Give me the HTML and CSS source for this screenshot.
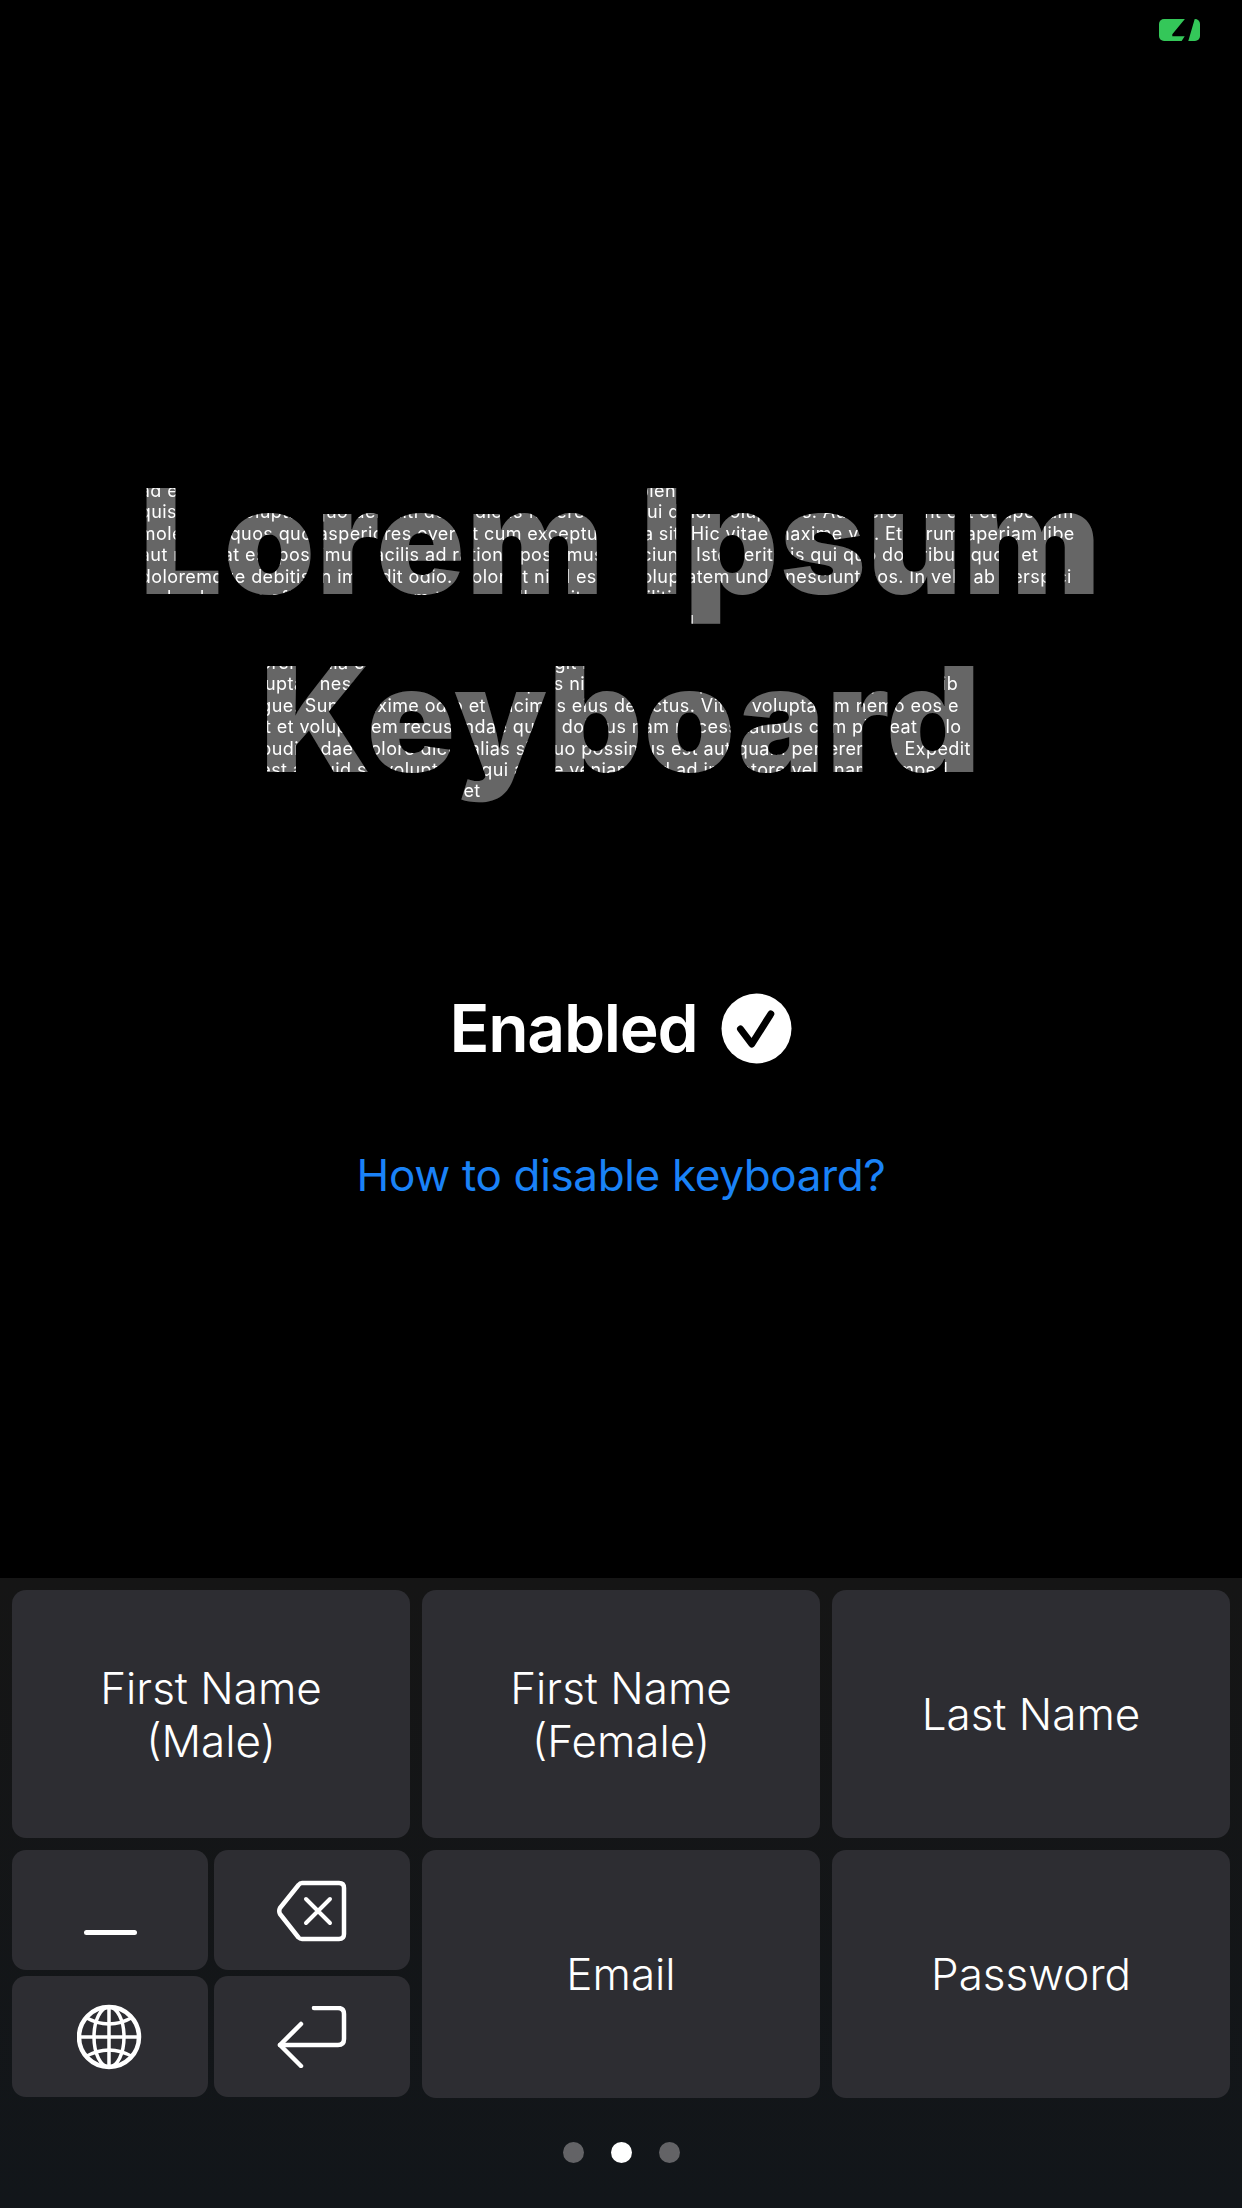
FILE: index.html
```html
<!DOCTYPE html>
<html lang="en">
<head>
  <meta charset="UTF-8">
  <title>Lorem Ipsum Keyboard</title>
  <link rel="stylesheet" href="styles.css">
</head>
<body>
  <div class="status-bar">
    <svg class="battery" width="41" height="22" viewBox="0 0 41 22">
      <rect width="41" height="22" rx="5" fill="#34c759"/>
      <path d="M26.700 -1 L13.300 15.300 V17.300 H25.700 L22 23 H29 L36 -1 Z" fill="#000"/>
    </svg>
  </div>

  <main class="hero">
    <h1 class="title">
      <span class="title-line">
        <span class="lorem">ad et voluptas nobis quaerat sint dolorem fuga ipsum sapiente<br>quis dolor voluptas quo deleniti dolor dictis facere. Sint qui dolor voluptates. Aut vero sunt est et aperiam<br>molestias quos quo asperiores ever et cum excepturi quia sit. Hic vitae maxime vel. Et rerum aperiam libe<br>aut repellat est possimus facilis ad ratione possimus nesciunt. Iste veritatis qui quo doloribus quod et<br>doloremque debitis in impedit odio. Dolor ut nihil est ut voluptatem unde nesciunt eos. In velit ab perspici<br>ea laudantium officiis non harum tempora illum sit nam militia<br>aliquam quia rerum dolores saepe et ratione nemo odit ad volu</span>
        <span class="title-mask">Lorem Ipsum</span>
      </span>
      <span class="title-line">
        <span class="lorem lorem-low">orem quia et tempora sint nam fugit rerum<br>luptas nesciunt dolorem sit capitis nihil magnam quod ut et sint nec quantitatib<br>gue. Sunt maxime odio et ducimus eius delectus. Vitae voluptatem nemo eos e<br>it et voluptatem recusandae quos dolibus nam necessitatibus cum placeat dolo<br>pudiandae dolore dicta alias sit quo possimus est aut quam perferendis. Expedit<br>est aliquid sit voluptates qui atque veniam sed ad inventore velit nam e imped<br>quia sit nobis ut mollis et</span>
        <span class="title-mask">Keyboard</span>
      </span>
    </h1>

    <div class="enabled">
      <span>Enabled</span>
      <svg class="check" width="71" height="71" viewBox="0 0 71 71">
        <circle cx="35.500" cy="35.500" r="35" fill="#fff"/>
        <path d="M19.500 36 L30.800 51 L49.800 21" fill="none" stroke="#000" stroke-width="7" stroke-linecap="round" stroke-linejoin="round"/>
      </svg>
    </div>

    <a class="help-link" href="#">How to disable keyboard?</a>
  </main>

  <section class="keyboard">
    <div class="keys">
      <button class="key">First Name<br>(Male)</button>
      <button class="key">First Name<br>(Female)</button>
      <button class="key">Last Name</button>

      <div class="mini-keys">
        <button class="key"><span class="space-bar"></span></button>
        <button class="key">
          <svg width="72" height="62" viewBox="0 0 72 62" fill="none" stroke="#fff" stroke-width="4.500" stroke-linejoin="round" stroke-linecap="round">
            <path d="M26 3 H63 Q68 3 68 8 V54 Q68 59 63 59 H26 Q24 59 22.500 57.500 L4 34 Q2.500 31 4 28 L22.500 5 Q24 3 26 3 Z"/>
            <path d="M30 19 L54 43 M54 19 L30 43" stroke-width="4"/>
          </svg>
        </button>
        <button class="key">
          <svg width="66" height="66" viewBox="1 0 66 66" fill="none" stroke="#fff" stroke-width="3.500">
            <circle cx="33" cy="33" r="30" stroke-width="4.500"/>
            <ellipse cx="33" cy="33" rx="15" ry="30"/>
            <path d="M33 3 V63 M3 33 H63"/>
            <path d="M9 13 Q33 27 57 13 M9 53 Q33 39 57 53"/>
          </svg>
        </button>
        <button class="key">
          <svg width="72" height="62" viewBox="0 0 72 62" fill="none" stroke="#fff" stroke-width="4.500" stroke-linejoin="round" stroke-linecap="round">
            <path d="M38 2 H62 Q68 2 68 8 V33 Q68 39 62 39 H4"/>
            <path d="M25 18 L4 39 L25 60"/>
          </svg>
        </button>
      </div>

      <button class="key">Email</button>
      <button class="key">Password</button>
    </div>

    <div class="page-dots">
      <span class="dot"></span>
      <span class="dot active"></span>
      <span class="dot"></span>
    </div>
  </section>
</body>
</html>
```
FILE: styles.css
```css
* {
  box-sizing: border-box;
}

body {
  margin: 0;
  height: 2208px;
  display: flex;
  flex-direction: column;
  background: #000;
  color: #fff;
  font-family: Inter, "Noto Sans", sans-serif;
  overflow: hidden;
}

.status-bar {
  height: 60px;
  padding: 19px 42px 0 0;
  display: flex;
  justify-content: flex-end;
  align-items: flex-start;
}

.hero {
  flex: 1;
  display: flex;
  flex-direction: column;
  align-items: center;
  padding-top: 392px;
}

.title {
  margin: 0;
  display: flex;
  flex-direction: column;
  align-items: center;
  font-size: 146px;
  font-weight: 900;
  letter-spacing: 1.300px;
}

/* gray block with small text, the mask lets it through only inside the letters */
.title-line {
  display: grid;
  isolation: isolate;
  overflow: hidden;
  height: 178px;
  line-height: 178px;
  background: #666;
}

.lorem,
.title-mask {
  grid-area: 1 / 1;
}

.lorem {
  width: 0;
  min-width: 100%;
  padding-top: 28px;
  font-size: 18px;
  font-weight: 400;
  line-height: 21.400px;
  letter-spacing: 0.4px;
  white-space: nowrap;
  overflow: hidden;
}

.lorem-low {
  padding-top: 22px;
}

.title-mask {
  background: #000;
  color: #fff;
  mix-blend-mode: multiply;
  white-space: nowrap;
  word-spacing: 5px;
}

.enabled {
  margin-top: 180px;
  display: flex;
  align-items: center;
  gap: 24px;
  font-size: 66px;
  font-weight: 600;
  letter-spacing: -1.300px;
}

.help-link {
  margin-top: 80px;
  color: #1a82f7;
  font-size: 44px;
  letter-spacing: -0.35px;
  text-decoration: none;
}

.keyboard {
  height: 630px;
  padding: 12px 12px 0;
  background: linear-gradient(#151515, #12161a);
}

.keys {
  display: grid;
  grid-template-columns: repeat(3, 398px);
  grid-auto-rows: 248px;
  gap: 12px;
}

.key {
  display: flex;
  align-items: center;
  justify-content: center;
  padding: 1px 0 0;
  border: none;
  border-radius: 14px;
  background: #2d2d32;
  color: #fff;
  font-family: inherit;
  font-size: 44px;
  font-weight: 350;
  line-height: 53px;
  text-align: center;
}

.mini-keys {
  display: grid;
  grid-template-columns: repeat(2, 1fr);
  grid-template-rows: 120px 121px;
  gap: 6px;
}

.space-bar {
  width: 53px;
  height: 5px;
  margin-top: 43px;
  border-radius: 3px;
  background: #fff;
}

.page-dots {
  display: flex;
  justify-content: center;
  gap: 27px;
  margin-top: 44px;
}

.dot {
  width: 21px;
  height: 21px;
  border-radius: 50%;
  background: #636366;
}

.dot.active {
  background: #fff;
}
```
